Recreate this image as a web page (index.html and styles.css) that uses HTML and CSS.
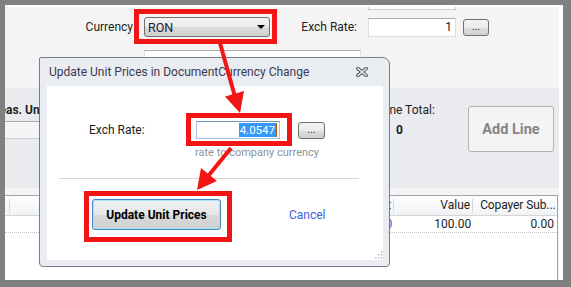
FILE: index.html
```html
<!DOCTYPE html>
<html lang="en">
<head>
    <meta charset="UTF-8">
    <title>Update Unit Prices</title>
    <link rel="stylesheet" href="styles.css">
</head>
<body>
<div class="screen">
    <div class="window">
        <div class="stub"></div>

        <div class="row-top">
            <span class="lbl lbl-currency">Currency</span>
            <div class="combo"><span>RON</span><i class="combo-arrow"></i></div>
            <span class="lbl lbl-rate">Exch Rate:</span>
            <div class="field field-rate">1</div>
            <button class="dots-btn">...</button>
        </div>

        <div class="row-second">
            <div class="field field-wide"></div>
        </div>

        <div class="band">
            <div class="band-left">
                <div class="col-head">Meas. Unit</div>
                <div class="col-cell"></div>
            </div>
            <div class="band-total">
                <div class="total-label">Line Total:</div>
                <div class="total-value">0</div>
            </div>
            <button class="btn-add">Add Line</button>
        </div>

        <div class="grid">
            <div class="grid-head">
                <div class="cell c0"></div>
                <div class="cell c1">Amount</div>
                <div class="cell c2">Value</div>
                <div class="cell c3">Copayer Sub...</div>
            </div>
            <div class="grid-row">
                <div class="cell c0"></div>
                <div class="cell c1 link">0</div>
                <div class="cell c2">100.00</div>
                <div class="cell c3 num">0.00</div>
            </div>
        </div>
    </div>

    <!-- the modal dialog lies over the form -->
    <div class="dialog">
        <div class="dlg-title">
            <span>Update Unit Prices in DocumentCurrency Change</span>
            <svg class="dlg-close" width="12" height="10" viewBox="0 0 12 10">
                <path d="M2 1.5 L10 8.5 M10 1.5 L2 8.5" stroke="#5b606b" stroke-width="3.6" stroke-linecap="square"/>
                <path d="M2 1.5 L10 8.5 M10 1.5 L2 8.5" stroke="#eef0f4" stroke-width="1.4" stroke-linecap="square"/>
            </svg>
        </div>
        <div class="dlg-body">
            <div class="dlg-row">
                <span class="dlg-label">Exch Rate:</span>
                <div class="field field-focus"><span class="sel">4.0547</span><i class="caret"></i></div>
                <button class="dots-btn dlg-dots">...</button>
            </div>
            <div class="dlg-hint">rate to company currency</div>
            <div class="dlg-sep"></div>
            <div class="dlg-actions">
                <button class="btn-update">Update Unit Prices</button>
                <span class="cancel">Cancel</span>
            </div>
            <svg class="grip" width="8" height="8" viewBox="0 0 8 8">
                <rect x="6" y="0" width="1.5" height="1.5" fill="#b5b8bd"/>
                <rect x="3" y="3" width="1.5" height="1.5" fill="#b5b8bd"/>
                <rect x="6" y="3" width="1.5" height="1.5" fill="#b5b8bd"/>
                <rect x="0" y="6" width="1.5" height="1.5" fill="#b5b8bd"/>
                <rect x="3" y="6" width="1.5" height="1.5" fill="#b5b8bd"/>
                <rect x="6" y="6" width="1.5" height="1.5" fill="#b5b8bd"/>
            </svg>
        </div>
    </div>

    <!-- annotation marks -->
    <div class="mark mark-combo"></div>
    <div class="mark mark-rate"></div>
    <div class="mark mark-update"></div>
    <svg class="arrows" width="571" height="287" viewBox="0 0 571 287">
        <line x1="220" y1="43" x2="234.5" y2="95" stroke="#f21515" stroke-width="4"/>
        <polygon points="240,113 225,96.5 244,91" fill="#f21515"/>
        <line x1="231" y1="148" x2="209" y2="175" stroke="#f21515" stroke-width="4"/>
        <polygon points="197,190 201,168 217,181" fill="#f21515"/>
    </svg>
</div>
</body>
</html>
```

FILE: styles.css
```css
/* Reset */
* {
    box-sizing: border-box;
}

body {
    margin: 0;
    background-color: #808080;
    font-family: Roboto, "Liberation Sans", sans-serif;
    font-size: 12px;
    color: #1e1e1e;
}

button {
    font-family: inherit;
    padding: 0;
}

.screen {
    position: relative;
    width: 571px;
    height: 287px;
    overflow: hidden;
    padding: 5px 8px 7px 5px;
}

.window {
    width: 558px;
    height: 275px;
    background-color: #f4f4f4;
    border-top: 2px solid #fff;
    border-right: 4px solid #fff;
    overflow: hidden;
}

/* Form fields */
.stub {
    margin-left: 363px;
    width: 88px;
    height: 3px;
    background-color: #fff;
    border: 1px solid #c9cdd4;
    border-top: none;
}

.row-top {
    display: flex;
    align-items: center;
    height: 20px;
    margin-top: 7px;
}

.lbl {
    text-align: right;
}

.lbl-currency {
    width: 128px;
}

.lbl-rate {
    width: 87px;
}

.combo {
    margin-left: 11px;
    width: 126px;
    height: 20px;
    border: 1px solid #707070;
    border-radius: 3px;
    background: linear-gradient(#f2f2f2 0%, #ebebeb 50%, #dddddd 51%, #cfcfcf 100%);
    display: flex;
    align-items: center;
    justify-content: space-between;
    padding: 0 4px 0 3px;
    color: #1c1c3a;
    font-size: 12.5px;
}

.combo-arrow {
    width: 0;
    height: 0;
    border-left: 4px solid transparent;
    border-right: 4px solid transparent;
    border-top: 4px solid #000;
}

.field {
    height: 19px;
    background-color: #fff;
    border: 1px solid #dbdfe6;
    border-top-color: #abadb3;
}

.field-rate {
    margin-left: 11px;
    width: 88px;
    text-align: right;
    padding-right: 3px;
    line-height: 17px;
}

.dots-btn {
    width: 26px;
    height: 17px;
    margin-left: 7px;
    border: 1px solid #707070;
    border-radius: 3px;
    background: linear-gradient(#f2f2f2 0%, #ebebeb 50%, #dddddd 51%, #cfcfcf 100%);
    font-size: 10px;
    line-height: 12px;
    color: #222;
}

.row-second {
    margin-top: 13px;
}

.field-wide {
    margin-left: 139px;
    width: 217px;
    height: 20px;
}

/* Detail band */
.band {
    display: flex;
    align-items: flex-start;
    margin-top: 18px;
    width: 554px;
    height: 100px;
    background-color: #e9ebee;
}

.band-left {
    width: 60px;
}

.col-head {
    height: 33px;
    padding-top: 15px;
    margin-left: -16px;
    font-weight: bold;
    white-space: nowrap;
    line-height: 14px;
}

.col-cell {
    height: 18px;
    background-color: #f5f5f5;
    border-top: 1px solid #a9acb1;
    border-bottom: 1px solid #c9ccd1;
}

.band-total {
    margin-left: 315px;
    width: 56px;
    padding-top: 15px;
    line-height: 14px;
}

.total-value {
    margin-top: 6px;
    padding-left: 16px;
    font-weight: bold;
}

.btn-add {
    margin-left: 32px;
    margin-top: 18px;
    width: 86px;
    height: 46px;
    background-color: #f4f4f4;
    border: 1px solid #adb2b5;
    border-radius: 3px;
    font-size: 14.5px;
    font-weight: bold;
    color: #858585;
}

/* Grid */
.grid {
    margin-top: 7px;
    width: 553px;
    height: 90px;
    background-color: #fff;
    border: 1px solid #9ea3a9;
    border-left: none;
}

.grid-head {
    display: flex;
    padding: 3px 0;
    height: 20px;
    background: linear-gradient(#ffffff, #f1f2f4);
    border-bottom: 1px solid #d5d5d5;
}

.grid-row {
    display: flex;
    height: 17px;
    border-bottom: 1px dotted #c3c3c3;
    line-height: 16px;
}

.cell {
    white-space: nowrap;
    overflow: hidden;
}

.grid-head .cell {
    height: 13px;
    line-height: 13px;
    border-right: 1px solid #d5d5d5;
}

.c0 {
    width: 5px;
}

.c1 {
    width: 385px;
    text-align: right;
    padding-right: 2px;
}

.c2 {
    width: 79px;
    text-align: right;
    padding-right: 2px;
}

.c3 {
    width: 84px;
    padding-left: 7px;
}

.grid-head .c3 {
    border-right: none;
    letter-spacing: -0.1px;
}

.c3.num {
    text-align: right;
    padding-right: 3px;
}

.link {
    color: #3a63d8;
}

/* Dialog */
.dialog {
    position: absolute;
    left: 39px;
    top: 57px;
    width: 351px;
    height: 210px;
    background-color: #e9ecf0;
    border: 1px solid #797d85;
    border-radius: 2px 7px 4px 4px;
    padding: 0 6px 6px 7px;
    display: flex;
    flex-direction: column;
}

.dlg-title {
    height: 28px;
    display: flex;
    align-items: center;
    justify-content: space-between;
    padding-left: 2px;
    color: #3a3a50;
    font-size: 12px;
}

.dlg-close {
    margin-right: 15px;
}

.dlg-body {
    position: relative;
    flex: 1;
    background-color: #fff;
}

.dlg-row {
    display: flex;
    align-items: center;
    margin-top: 35px;
    height: 18px;
}

.dlg-label {
    width: 149px;
    padding-left: 42px;
}

.field-focus {
    width: 84px;
    height: 18px;
    border-color: #a6c4e6;
    border-top-color: #6f93bf;
    display: flex;
    justify-content: flex-end;
    align-items: center;
    padding-right: 2px;
}

.sel {
    background-color: #3399ff;
    color: #fff;
    line-height: 14px;
    padding: 0 1px;
    font-size: 11.5px;
}

.caret {
    width: 1px;
    height: 14px;
    background-color: #b45a00;
}

.dlg-dots {
    margin-left: 18px;
    width: 27px;
}

.dlg-hint {
    margin-top: 7px;
    margin-left: 148px;
    line-height: 14px;
    font-size: 11px;
    color: #8b919b;
}

.dlg-sep {
    margin: 18px 0 0 12px;
    width: 300px;
    height: 1px;
    background-color: #d6d6d6;
}

.dlg-actions {
    display: flex;
    align-items: center;
    margin-top: 20px;
}

.btn-update {
    margin-left: 45px;
    width: 129px;
    height: 31px;
    border: 1px solid #3c8cc4;
    border-radius: 3px;
    box-shadow: inset 0 0 0 1px #a6e4fa;
    background: linear-gradient(#f0f1f2 0%, #e6e7e8 50%, #d8d9da 51%, #cfd0d1 100%);
    font-size: 12px;
    font-weight: bold;
    color: #000;
}

.cancel {
    margin-left: 68px;
    color: #3c62dc;
}

.grip {
    position: absolute;
    right: 0;
    bottom: 1px;
}

/* Annotations */
.mark {
    position: absolute;
    border: 5px solid #f21515;
}

.mark-combo {
    left: 134px;
    top: 9px;
    width: 143px;
    height: 35px;
}

.mark-rate {
    left: 186px;
    top: 113px;
    width: 106px;
    height: 33px;
}

.mark-update {
    left: 84px;
    top: 191px;
    width: 148px;
    height: 51px;
}

.arrows {
    position: absolute;
    left: 0;
    top: 0;
    pointer-events: none;
}
```
